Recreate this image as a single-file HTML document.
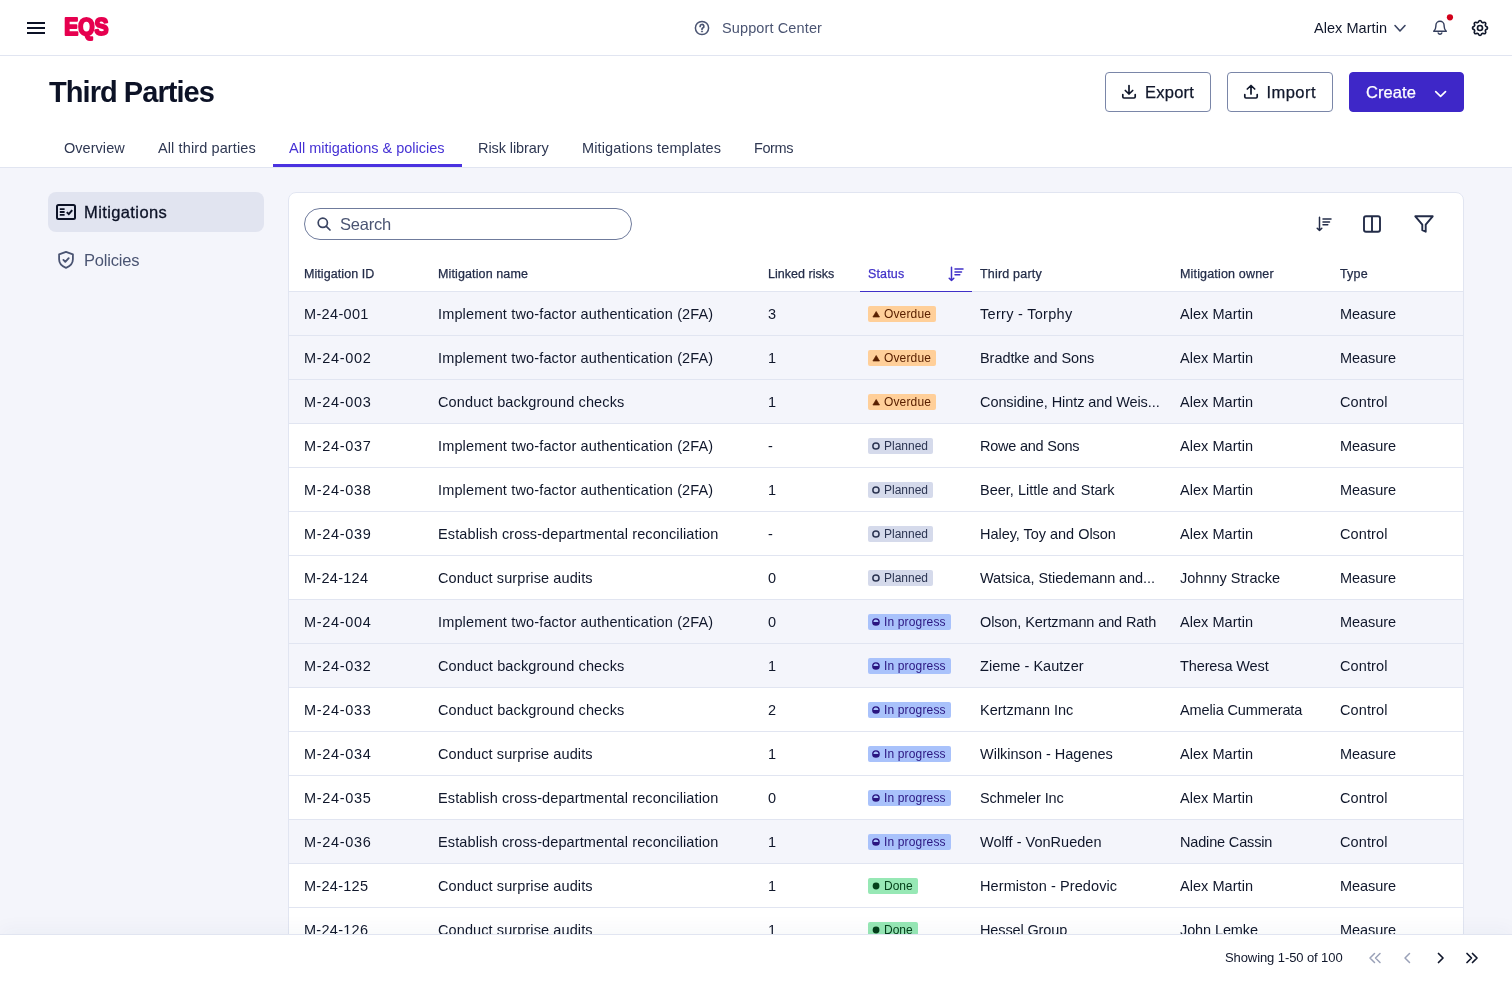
<!DOCTYPE html><html lang="en"><head><meta charset="utf-8"><title>Third Parties</title>
<style>
*{box-sizing:border-box;margin:0;padding:0}
html,body{width:1512px;height:982px;overflow:hidden;background:#f4f5fb;font-family:"Liberation Sans",sans-serif;color:#10172b;-webkit-font-smoothing:antialiased}
.abs{position:absolute}
#app{position:relative;width:1512px;height:982px;overflow:hidden;will-change:transform}
#top{position:absolute;left:0;top:0;width:1512px;height:56px;background:#fff;border-bottom:1px solid #e1e5f1}
#head{position:absolute;left:0;top:56px;width:1512px;height:112px;background:#fff;border-bottom:1px solid #e1e5f1}
.t{position:absolute;white-space:nowrap;line-height:1}
svg{position:absolute;display:block;overflow:visible}
#title{left:49px;top:78px;font-size:29px;font-weight:700;color:#0c1226}
.tab{font-size:14.5px;top:141px;color:#2f3853}
.tab.on{color:#4531d4}
.btn{position:absolute;top:72px;height:40px;border:1px solid #7a86a8;border-radius:4px;background:#fff}
.btn .t{font-size:16.5px;top:11px;color:#10172b;-webkit-text-stroke:0.250px #10172b}
#create{background:#3e27c8;border-color:#3e27c8}
#create .t{color:#fff;-webkit-text-stroke-color:#fff}
#side1{position:absolute;left:48px;top:192px;width:216px;height:40px;border-radius:8px;background:#e1e4f0}
#card{position:absolute;left:288px;top:192px;width:1176px;height:760px;background:#fff;border:1px solid #e1e5f1;border-radius:8px 8px 0 0;overflow:hidden}
#search{position:absolute;left:15px;top:15px;width:328px;height:32px;border:1px solid #6f7b9c;border-radius:16px;background:#fff}
.h{position:absolute;top:68px;font-size:12.5px;line-height:26px;color:#232c48;white-space:nowrap;-webkit-text-stroke:0.250px #232c48}
.row{position:absolute;left:0;width:1174px;height:44px;border-bottom:1px solid #e1e5f1;font-size:14.5px;line-height:44px;white-space:nowrap;color:#10172b}
.row.sh{background:#f4f5fb}
.c{position:absolute;top:0}
.c1{left:15px}.c2{left:149px}.c3{left:479px}.c5{left:691px}.c6{left:891px}.c7{left:1051px}
.badge{position:absolute;left:579px;top:14px;height:16px;border-radius:2px;font-size:12px;line-height:16px;padding:0 5px 0 16px}
.badge .bi{left:4px;top:4px;width:8px;height:8px}
.bt{position:relative;top:0}
.ov{background:#ffcf99;color:#5a2000}
.pl{background:#d5daeb;color:#2c3552}
.ip{background:#a9c2fb;color:#2a1580}
.dn{background:#97e8b5;color:#05401a}
#foot{position:absolute;left:0;top:934px;width:1512px;height:48px;background:#fff;border-top:1px solid #e1e5f1;box-shadow:0 -6px 18px rgba(40,50,110,0.035)}
</style></head><body>
<div id="app">

<div id="top">
  <svg style="left:24px;top:16px" width="24" height="24" viewBox="0 0 24 24"><path d="M3 6h18v2H3zM3 11h18v2H3zM3 16h18v2H3z" fill="#0c1226"></path></svg>
  <svg id="logo" style="left:62px;top:14px" width="50" height="30" viewBox="0 0 50 30"><text x="2.300" y="21.300" font-family="Liberation Sans, sans-serif" font-weight="700" font-size="24.500" fill="#e6004f" stroke="#e6004f" stroke-width="2.200" stroke-linejoin="round" textLength="44.300" lengthAdjust="spacingAndGlyphs">EQS</text></svg>
  <svg style="left:694px;top:20px" width="16" height="16" viewBox="0 0 16 16" fill="none" stroke="#4a5472" stroke-width="1.5"><circle cx="8" cy="8" r="6.6"></circle><path d="M6.100 6.400a1.900 1.900 0 1 1 2.700 1.700c-.500.300-.800.600-.800 1.200" stroke-linecap="round" stroke-width="1.700"></path><circle cx="8" cy="11.500" r=".600" fill="#4a5472" stroke-width=".900"></circle></svg>
  <span class="t" style="left: 722px; top: 21px; font-size: 14.5px; color: rgb(74, 84, 114); letter-spacing: 0.12px;">Support Center</span>
  <span class="t" style="left: 1314px; top: 21px; font-size: 14.5px; color: rgb(16, 23, 43); letter-spacing: 0.05px;">Alex Martin</span>
  <svg style="left:1394px;top:24px" width="12" height="9" viewBox="0 0 12 9" fill="none" stroke="#3a4462" stroke-width="1.6" stroke-linecap="round" stroke-linejoin="round"><path d="M1 1.5l5 5.5 5-5.5"></path></svg>
  <svg style="left:1430px;top:18px" width="20" height="20" viewBox="0 0 20 20" fill="none" stroke="#333d5c" stroke-width="1.400" stroke-linecap="round" stroke-linejoin="round"><path d="M3.700 13.300C5.300 11.800 5.900 10 5.900 8V7.300a4.100 4.100 0 0 1 8.200 0V8c0 2 .600 3.800 2.200 5.300zM8.200 15a1.900 1.900 0 0 0 3.600 0"></path></svg>
  <svg style="left:1446px;top:13px" width="8" height="8" viewBox="0 0 8 8"><circle cx="3.950" cy="4.300" r="3.100" fill="#d2001a"></circle></svg>
  <svg style="left:1470px;top:18px" width="20" height="20" viewBox="0 0 24 24" fill="none" stroke="#10172b" stroke-width="2" stroke-linecap="round" stroke-linejoin="round"><path d="M10.325 4.317c.426-1.756 2.924-1.756 3.350 0a1.724 1.724 0 0 0 2.573 1.066c1.543-.940 3.310.826 2.370 2.370a1.724 1.724 0 0 0 1.065 2.572c1.756.426 1.756 2.924 0 3.350a1.724 1.724 0 0 0-1.066 2.573c.940 1.543-.826 3.310-2.370 2.370a1.724 1.724 0 0 0-2.572 1.065c-.426 1.756-2.924 1.756-3.350 0a1.724 1.724 0 0 0-2.573-1.066c-1.543.940-3.310-.826-2.370-2.370a1.724 1.724 0 0 0-1.065-2.572c-1.756-.426-1.756-2.924 0-3.350a1.724 1.724 0 0 0 1.066-2.573c-.940-1.543.826-3.310 2.370-2.370.996.608 2.296.070 2.572-1.065z"></path><circle cx="12" cy="12" r="3"></circle></svg>
</div>

<div id="head"></div>
<span class="t" id="title" style="letter-spacing: -0.95px;">Third Parties</span>

<div class="btn" style="left:1105px;width:106px">
  <svg style="left:15px;top:11.300px" width="16" height="16" viewBox="0 0 16 16" fill="none" stroke="#10172b" stroke-width="1.700" stroke-linecap="round" stroke-linejoin="round"><path d="M8 1.500v8.500M4.300 6.500L8 10l3.700-3.500M1.800 10.500v2.300a1.200 1.200 0 0 0 1.200 1.200h10a1.200 1.200 0 0 0 1.200-1.200v-2.300"></path></svg>
  <span class="t" style="left: 39px; letter-spacing: 0.24px;">Export</span>
</div>
<div class="btn" style="left:1227px;width:106px">
  <svg style="left:15px;top:11.300px" width="16" height="16" viewBox="0 0 16 16" fill="none" stroke="#10172b" stroke-width="1.700" stroke-linecap="round" stroke-linejoin="round"><path d="M8 10V1.500M4.300 5L8 1.500 11.700 5M1.800 10.500v2.300a1.200 1.200 0 0 0 1.200 1.200h10a1.200 1.200 0 0 0 1.200-1.200v-2.300"></path></svg>
  <span class="t" style="left: 38.5px; letter-spacing: 0.45px;">Import</span>
</div>
<div class="btn" id="create" style="left:1349px;width:115px">
  <span class="t" style="left: 16px; letter-spacing: 0.09px;">Create</span>
  <svg style="left:84px;top:17px" width="13" height="8" viewBox="0 0 13 8" fill="none" stroke="#fff" stroke-width="1.700" stroke-linecap="round" stroke-linejoin="round"><path d="M1.700 1.700L6.600 6.300l4.900-4.600"></path></svg>
</div>

<span class="t tab" style="left: 64px; letter-spacing: 0.04px;">Overview</span>
<span class="t tab" style="left: 158px; letter-spacing: 0.11px;">All third parties</span>
<span class="t tab on" style="left: 289px; letter-spacing: 0px;">All mitigations &amp; policies</span>
<span class="t tab" style="left: 478px; letter-spacing: -0.09px;">Risk library</span>
<span class="t tab" style="left: 582px; letter-spacing: 0.14px;">Mitigations templates</span>
<span class="t tab" style="left: 754px; letter-spacing: -0.41px;">Forms</span>
<div class="abs" style="left:273px;top:164px;width:189px;height:3px;background:#4a32e0"></div>

<div id="side1"></div>
<svg style="left:56px;top:202px" width="20" height="20" viewBox="0 0 20 20" fill="none" stroke="#0c1226"><rect x="1" y="3" width="18" height="14" rx="1.500" stroke-width="2"></rect><path d="M3.800 7.100h4.800M3.800 10h4.800M3.800 12.900h4.800" stroke-width="1.900"></path><path d="M10.800 10.100l2 2 3.400-3.900" stroke-width="2"></path></svg>
<span class="t" style="left: 84px; top: 204px; font-size: 16.5px; color: rgb(12, 18, 38); -webkit-text-stroke: 0.3px rgb(12, 18, 38); letter-spacing: 0.39px;">Mitigations</span>
<svg style="left:56px;top:250px" width="20" height="20" viewBox="0 0 20 20" fill="none" stroke="#4a5472" stroke-width="1.600" stroke-linejoin="round" stroke-linecap="round"><path d="M10 1.800l6.900 2.500v5c0 3.900-2.800 7-6.900 8.500-4.100-1.500-6.900-4.600-6.900-8.500v-5z" stroke-width="1.800"></path><path d="M7.400 9.900l1.900 1.900 3.400-3.600" stroke-width="1.900"></path></svg>
<span class="t" style="left: 84px; top: 252px; font-size: 16.5px; color: rgb(74, 84, 114); letter-spacing: -0.19px;">Policies</span>

<div id="card">
  <div id="search">
    <svg style="left:11px;top:7px" width="16" height="16" viewBox="0 0 16 16" fill="none" stroke="#3a4462" stroke-width="1.700" stroke-linecap="round"><circle cx="6.800" cy="6.800" r="4.600"></circle><path d="M10.300 10.300l3.700 3.700"></path></svg>
    <span class="t" style="left: 35px; top: 7px; font-size: 16.5px; color: rgb(74, 84, 114); letter-spacing: -0.24px;">Search</span>
  </div>
  <svg style="left:1026px;top:23px" width="18" height="18" viewBox="0 0 18 18" fill="none" stroke="#232c48" stroke-width="1.500" stroke-linecap="round" stroke-linejoin="round"><path d="M4.500 1.200v13.300M2.200 12.200l2.300 2.300 2.300-2.300M8 3h8M8 5.900h6.500M8 8.800h4.800"></path></svg>
  <svg style="left:1073px;top:21.300px" width="20" height="20" viewBox="0 0 20 20" fill="none" stroke="#232c48" stroke-width="1.900" stroke-linejoin="round"><rect x="2" y="2.300" width="16" height="15.400" rx="2"></rect><path d="M10 2.300v15.400"></path></svg>
  <svg style="left:1124px;top:21.300px" width="22" height="20" viewBox="0 0 22 20" fill="none" stroke="#232c48" stroke-width="1.900" stroke-linejoin="round"><path d="M2.300 2.300h17.400l-7 8.400v7l-3.400-1.500v-5.500z"></path></svg>

  <span class="h" style="left: 15px; letter-spacing: 0.07px;">Mitigation ID</span>
  <span class="h" style="left: 149px; letter-spacing: 0.12px;">Mitigation name</span>
  <span class="h" style="left: 479px; letter-spacing: 0.03px;">Linked risks</span>
  <span class="h" style="left: 579px; color: rgb(64, 48, 200); -webkit-text-stroke-color: rgb(64, 48, 200); letter-spacing: 0.14px;">Status</span>
  <svg style="left:658px;top:73px" width="18" height="18" viewBox="0 0 18 18" fill="none" stroke="#4030c8" stroke-width="1.500" stroke-linecap="round" stroke-linejoin="round"><path d="M4.500 1.200v13.300M2.200 12.200l2.300 2.300 2.300-2.300M8 3h8M8 5.900h6.500M8 8.800h4.800"></path></svg>
  <span class="h" style="left: 691px; letter-spacing: 0.19px;">Third party</span>
  <span class="h" style="left: 891px; letter-spacing: 0.17px;">Mitigation owner</span>
  <span class="h" style="left: 1051px; letter-spacing: 0.17px;">Type</span>
  <div class="abs" style="left:0;top:98px;width:1174px;height:1px;background:#e1e5f1"></div>
  <div class="abs" style="left:571px;top:97.500px;width:112px;height:1.500px;background:#4030c8"></div>
<div class="row sh" style="top:99px"><span class="c c1" style="letter-spacing: 0.34px;">M-24-001</span><span class="c c2" style="letter-spacing: 0.15px;">Implement two-factor authentication (2FA)</span><span class="c c3">3</span><span class="badge ov"><svg class="bi" viewBox="0 0 8 8"><path d="M4.200 1.500 L7.500 7 H0.900 Z" fill="#5a2000" stroke="#5a2000" stroke-width="0.700" stroke-linejoin="round"></path></svg><span class="bt" style="letter-spacing: 0.14px;">Overdue</span></span><span class="c c5" style="letter-spacing: 0.29px;">Terry - Torphy</span><span class="c c6" style="letter-spacing: 0.05px;">Alex Martin</span><span class="c c7" style="letter-spacing: -0.06px;">Measure</span></div>
<div class="row sh" style="top:143px"><span class="c c1" style="letter-spacing: 0.67px;">M-24-002</span><span class="c c2" style="letter-spacing: 0.15px;">Implement two-factor authentication (2FA)</span><span class="c c3">1</span><span class="badge ov"><svg class="bi" viewBox="0 0 8 8"><path d="M4.200 1.500 L7.500 7 H0.900 Z" fill="#5a2000" stroke="#5a2000" stroke-width="0.700" stroke-linejoin="round"></path></svg><span class="bt" style="letter-spacing: 0.14px;">Overdue</span></span><span class="c c5" style="letter-spacing: -0.06px;">Bradtke and Sons</span><span class="c c6" style="letter-spacing: 0.05px;">Alex Martin</span><span class="c c7" style="letter-spacing: -0.06px;">Measure</span></div>
<div class="row sh" style="top:187px"><span class="c c1" style="letter-spacing: 0.67px;">M-24-003</span><span class="c c2" style="letter-spacing: 0.14px;">Conduct background checks</span><span class="c c3">1</span><span class="badge ov"><svg class="bi" viewBox="0 0 8 8"><path d="M4.200 1.500 L7.500 7 H0.900 Z" fill="#5a2000" stroke="#5a2000" stroke-width="0.700" stroke-linejoin="round"></path></svg><span class="bt" style="letter-spacing: 0.14px;">Overdue</span></span><span class="c c5" style="letter-spacing: -0.08px;">Considine, Hintz and Weis...</span><span class="c c6" style="letter-spacing: 0.05px;">Alex Martin</span><span class="c c7" style="letter-spacing: 0.11px;">Control</span></div>
<div class="row" style="top:231px"><span class="c c1" style="letter-spacing: 0.67px;">M-24-037</span><span class="c c2" style="letter-spacing: 0.15px;">Implement two-factor authentication (2FA)</span><span class="c c3">-</span><span class="badge pl"><svg class="bi" viewBox="0 0 8 8"><circle cx="3.950" cy="4" r="3.100" fill="none" stroke="#2c3552" stroke-width="1.500"></circle></svg><span class="bt" style="letter-spacing: 0px;">Planned</span></span><span class="c c5" style="letter-spacing: -0.23px;">Rowe and Sons</span><span class="c c6" style="letter-spacing: 0.05px;">Alex Martin</span><span class="c c7" style="letter-spacing: -0.06px;">Measure</span></div>
<div class="row" style="top:275px"><span class="c c1" style="letter-spacing: 0.67px;">M-24-038</span><span class="c c2" style="letter-spacing: 0.15px;">Implement two-factor authentication (2FA)</span><span class="c c3">1</span><span class="badge pl"><svg class="bi" viewBox="0 0 8 8"><circle cx="3.950" cy="4" r="3.100" fill="none" stroke="#2c3552" stroke-width="1.500"></circle></svg><span class="bt" style="letter-spacing: 0px;">Planned</span></span><span class="c c5" style="letter-spacing: 0px;">Beer, Little and Stark</span><span class="c c6" style="letter-spacing: 0.05px;">Alex Martin</span><span class="c c7" style="letter-spacing: -0.06px;">Measure</span></div>
<div class="row" style="top:319px"><span class="c c1" style="letter-spacing: 0.67px;">M-24-039</span><span class="c c2" style="letter-spacing: 0.11px;">Establish cross-departmental reconciliation</span><span class="c c3">-</span><span class="badge pl"><svg class="bi" viewBox="0 0 8 8"><circle cx="3.950" cy="4" r="3.100" fill="none" stroke="#2c3552" stroke-width="1.500"></circle></svg><span class="bt" style="letter-spacing: 0px;">Planned</span></span><span class="c c5" style="letter-spacing: -0.03px;">Haley, Toy and Olson</span><span class="c c6" style="letter-spacing: 0.05px;">Alex Martin</span><span class="c c7" style="letter-spacing: 0.11px;">Control</span></div>
<div class="row" style="top:363px"><span class="c c1" style="letter-spacing: 0.28px;">M-24-124</span><span class="c c2" style="letter-spacing: 0.1px;">Conduct surprise audits</span><span class="c c3">0</span><span class="badge pl"><svg class="bi" viewBox="0 0 8 8"><circle cx="3.950" cy="4" r="3.100" fill="none" stroke="#2c3552" stroke-width="1.500"></circle></svg><span class="bt" style="letter-spacing: 0px;">Planned</span></span><span class="c c5" style="letter-spacing: -0.07px;">Watsica, Stiedemann and...</span><span class="c c6" style="letter-spacing: 0.01px;">Johnny Stracke</span><span class="c c7" style="letter-spacing: -0.06px;">Measure</span></div>
<div class="row sh" style="top:407px"><span class="c c1" style="letter-spacing: 0.67px;">M-24-004</span><span class="c c2" style="letter-spacing: 0.15px;">Implement two-factor authentication (2FA)</span><span class="c c3">0</span><span class="badge ip"><svg class="bi" viewBox="0 0 8 8"><circle cx="3.950" cy="4" r="3.850" fill="#2a1580"></circle><path d="M1.450 4 A2.500 2.500 0 0 1 6.450 4 Z" fill="#a9c2fb"></path></svg><span class="bt" style="letter-spacing: 0.15px;">In progress</span></span><span class="c c5" style="letter-spacing: -0.11px;">Olson, Kertzmann and Rath</span><span class="c c6" style="letter-spacing: 0.05px;">Alex Martin</span><span class="c c7" style="letter-spacing: -0.06px;">Measure</span></div>
<div class="row sh" style="top:451px"><span class="c c1" style="letter-spacing: 0.67px;">M-24-032</span><span class="c c2" style="letter-spacing: 0.14px;">Conduct background checks</span><span class="c c3">1</span><span class="badge ip"><svg class="bi" viewBox="0 0 8 8"><circle cx="3.950" cy="4" r="3.850" fill="#2a1580"></circle><path d="M1.450 4 A2.500 2.500 0 0 1 6.450 4 Z" fill="#a9c2fb"></path></svg><span class="bt" style="letter-spacing: 0.15px;">In progress</span></span><span class="c c5" style="letter-spacing: 0.03px;">Zieme - Kautzer</span><span class="c c6" style="letter-spacing: -0.12px;">Theresa West</span><span class="c c7" style="letter-spacing: 0.11px;">Control</span></div>
<div class="row" style="top:495px"><span class="c c1" style="letter-spacing: 0.67px;">M-24-033</span><span class="c c2" style="letter-spacing: 0.14px;">Conduct background checks</span><span class="c c3">2</span><span class="badge ip"><svg class="bi" viewBox="0 0 8 8"><circle cx="3.950" cy="4" r="3.850" fill="#2a1580"></circle><path d="M1.450 4 A2.500 2.500 0 0 1 6.450 4 Z" fill="#a9c2fb"></path></svg><span class="bt" style="letter-spacing: 0.15px;">In progress</span></span><span class="c c5" style="letter-spacing: -0.01px;">Kertzmann Inc</span><span class="c c6" style="letter-spacing: -0.12px;">Amelia Cummerata</span><span class="c c7" style="letter-spacing: 0.11px;">Control</span></div>
<div class="row" style="top:539px"><span class="c c1" style="letter-spacing: 0.67px;">M-24-034</span><span class="c c2" style="letter-spacing: 0.1px;">Conduct surprise audits</span><span class="c c3">1</span><span class="badge ip"><svg class="bi" viewBox="0 0 8 8"><circle cx="3.950" cy="4" r="3.850" fill="#2a1580"></circle><path d="M1.450 4 A2.500 2.500 0 0 1 6.450 4 Z" fill="#a9c2fb"></path></svg><span class="bt" style="letter-spacing: 0.15px;">In progress</span></span><span class="c c5" style="letter-spacing: -0.01px;">Wilkinson - Hagenes</span><span class="c c6" style="letter-spacing: 0.05px;">Alex Martin</span><span class="c c7" style="letter-spacing: -0.06px;">Measure</span></div>
<div class="row" style="top:583px"><span class="c c1" style="letter-spacing: 0.67px;">M-24-035</span><span class="c c2" style="letter-spacing: 0.11px;">Establish cross-departmental reconciliation</span><span class="c c3">0</span><span class="badge ip"><svg class="bi" viewBox="0 0 8 8"><circle cx="3.950" cy="4" r="3.850" fill="#2a1580"></circle><path d="M1.450 4 A2.500 2.500 0 0 1 6.450 4 Z" fill="#a9c2fb"></path></svg><span class="bt" style="letter-spacing: 0.15px;">In progress</span></span><span class="c c5" style="letter-spacing: -0.07px;">Schmeler Inc</span><span class="c c6" style="letter-spacing: 0.05px;">Alex Martin</span><span class="c c7" style="letter-spacing: 0.11px;">Control</span></div>
<div class="row sh" style="top:627px"><span class="c c1" style="letter-spacing: 0.67px;">M-24-036</span><span class="c c2" style="letter-spacing: 0.11px;">Establish cross-departmental reconciliation</span><span class="c c3">1</span><span class="badge ip"><svg class="bi" viewBox="0 0 8 8"><circle cx="3.950" cy="4" r="3.850" fill="#2a1580"></circle><path d="M1.450 4 A2.500 2.500 0 0 1 6.450 4 Z" fill="#a9c2fb"></path></svg><span class="bt" style="letter-spacing: 0.15px;">In progress</span></span><span class="c c5" style="letter-spacing: 0.02px;">Wolff - VonRueden</span><span class="c c6" style="letter-spacing: -0.16px;">Nadine Cassin</span><span class="c c7" style="letter-spacing: 0.11px;">Control</span></div>
<div class="row" style="top:671px"><span class="c c1" style="letter-spacing: 0.28px;">M-24-125</span><span class="c c2" style="letter-spacing: 0.1px;">Conduct surprise audits</span><span class="c c3">1</span><span class="badge dn"><svg class="bi" viewBox="0 0 8 8"><circle cx="4.050" cy="4" r="3.400" fill="#05401a"></circle></svg><span class="bt" style="letter-spacing: -0.04px;">Done</span></span><span class="c c5" style="letter-spacing: 0.09px;">Hermiston - Predovic</span><span class="c c6" style="letter-spacing: 0.05px;">Alex Martin</span><span class="c c7" style="letter-spacing: -0.06px;">Measure</span></div>
<div class="row" style="top:715px"><span class="c c1" style="letter-spacing: 0.28px;">M-24-126</span><span class="c c2" style="letter-spacing: 0.1px;">Conduct surprise audits</span><span class="c c3">1</span><span class="badge dn"><svg class="bi" viewBox="0 0 8 8"><circle cx="4.050" cy="4" r="3.400" fill="#05401a"></circle></svg><span class="bt" style="letter-spacing: -0.04px;">Done</span></span><span class="c c5" style="letter-spacing: -0.13px;">Hessel Group</span><span class="c c6" style="letter-spacing: -0.11px;">John Lemke</span><span class="c c7" style="letter-spacing: -0.06px;">Measure</span></div>
</div>

<div id="foot">
  <span class="t" style="left: 1225px; top: 16px; font-size: 13px; color: rgb(16, 23, 43); letter-spacing: -0.09px;">Showing 1-50 of 100</span>
  <svg style="left:1368px;top:15.500px" width="14" height="14" viewBox="0 0 14 14" fill="none" stroke="#9aa1b8" stroke-width="1.500" stroke-linecap="round" stroke-linejoin="round"><path d="M6.500 2.500L2 7l4.500 4.500M12 2.500L7.500 7l4.500 4.500"></path></svg>
  <svg style="left:1400px;top:15.500px" width="14" height="14" viewBox="0 0 14 14" fill="none" stroke="#9aa1b8" stroke-width="1.500" stroke-linecap="round" stroke-linejoin="round"><path d="M9.500 2.500L5 7l4.500 4.500"></path></svg>
  <svg style="left:1434px;top:15.500px" width="14" height="14" viewBox="0 0 14 14" fill="none" stroke="#10172b" stroke-width="1.700" stroke-linecap="round" stroke-linejoin="round"><path d="M4.500 2.500L9 7l-4.500 4.500"></path></svg>
  <svg style="left:1465px;top:15.500px" width="14" height="14" viewBox="0 0 14 14" fill="none" stroke="#10172b" stroke-width="1.700" stroke-linecap="round" stroke-linejoin="round"><path d="M2 2.500L6.500 7 2 11.500M7.500 2.500L12 7l-4.500 4.500"></path></svg>
</div>
</div>

</body></html>
